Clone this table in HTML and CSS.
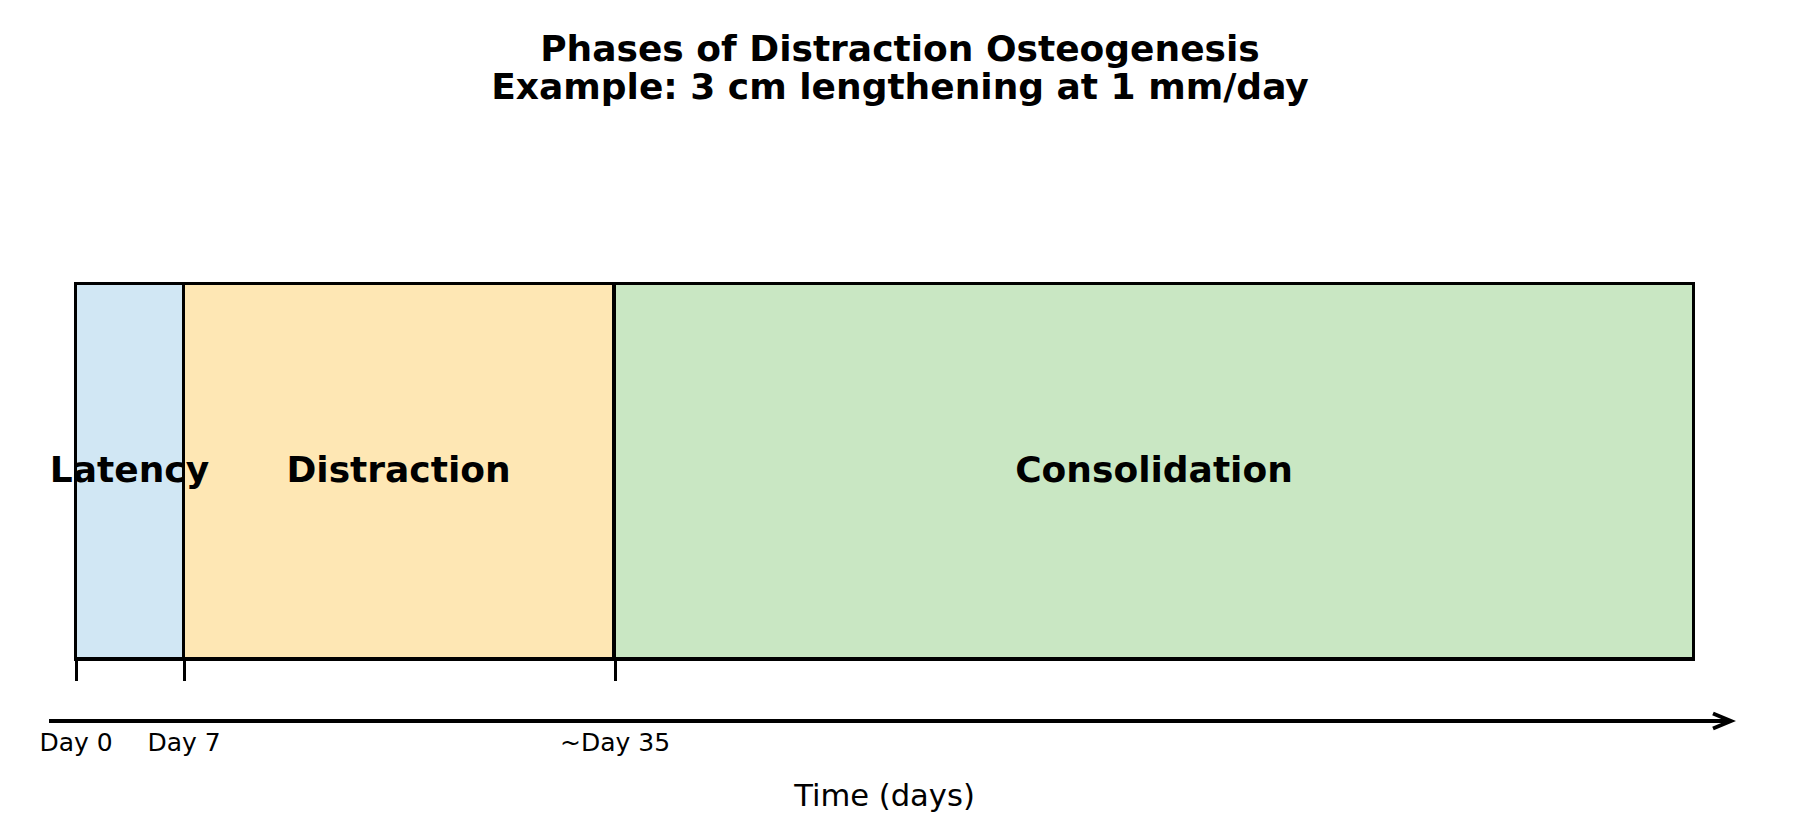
FILE: index.html
```html
<!DOCTYPE html>
<html lang="en">
<head>
<meta charset="utf-8">
<title>Phases of Distraction Osteogenesis</title>
<link rel="stylesheet" href="styles.css">
</head>
<body>
<div class="page">
  <h1 class="title">Phases of Distraction Osteogenesis<br>Example: 3 cm lengthening at 1 mm/day</h1>
  <div class="chart">
    <div class="bar">
      <div class="seg lat"><span class="phase">Latency</span></div>
      <div class="seg dis"><span class="phase">Distraction</span></div>
      <div class="seg con"><span class="phase">Consolidation</span></div>
    </div>
    <div class="ticks">
      <div class="tick"></div>
      <div class="tick"></div>
      <div class="tick"></div>
    </div>
  </div>
  <div class="axis">
    <svg class="arrow" width="1690" height="20" viewBox="0 0 1690 20">
      <line x1="3" y1="10" x2="1683" y2="10" stroke="#000" stroke-width="4"/>
      <polyline points="1667,2.5 1685,10 1667,17.5" fill="none" stroke="#000" stroke-width="4" stroke-linejoin="miter"/>
    </svg>
  </div>
  <div class="chart">
    <div class="labels">
      <div class="cell"><span class="anchor"><span class="daylbl">Day 0</span></span></div>
      <div class="cell"><span class="anchor"><span class="daylbl">Day 7</span></span></div>
      <div class="cell"><span class="anchor"><span class="daylbl">~Day 35</span></span></div>
    </div>
    <div class="xlabel">Time (days)</div>
  </div>
</div>
</body>
</html>
```
FILE: styles.css
```css
html, body {
  margin: 0;
  padding: 0;
  background: #ffffff;
}
body {
  width: 1800px;
  height: 840px;
  overflow: hidden;
  font-family: "DejaVu Sans", "Liberation Sans", sans-serif;
  color: #000;
}
.page {
  padding-top: 30px;
}
.title {
  margin: 0;
  font-size: 36px;
  font-weight: bold;
  line-height: 38px;
  text-align: center;
}
.chart {
  margin-left: 74px;
  width: 1621px;
}
.bar {
  margin-top: 176px;
  height: 379px;
  box-sizing: border-box;
  border: 3px solid #000;
  border-bottom-width: 4px;
  display: flex;
}
.seg {
  display: flex;
  align-items: center;
  justify-content: center;
  box-sizing: border-box;
  min-width: 0;
}
.lat {
  width: 108px;
  flex: none;
  background: #d1e7f4;
  border-right: 3px solid #000;
}
.dis {
  width: 431px;
  flex: none;
  background: #fee7b4;
  border-right: 4px solid #000;
}
.con {
  flex: 1;
  background: #c9e7c3;
}
.phase {
  position: relative;
  z-index: 1;
  white-space: nowrap;
  font-size: 36px;
  font-weight: bold;
  margin-top: -4px;
}
.ticks {
  display: grid;
  grid-template-columns: 108px 431px 1fr;
  margin-left: 1px;
  height: 20px;
}
.tick {
  width: 3px;
  height: 20px;
  background: #000;
}
.axis {
  margin-top: 30px;
  margin-left: 46px;
  height: 20px;
}
.arrow {
  display: block;
}
.labels {
  display: grid;
  grid-template-columns: 108px 431px 1fr;
  margin-left: 2px;
  margin-top: -3px;
}
.cell {
  display: flex;
}
.anchor {
  width: 0;
  display: flex;
  justify-content: center;
}
.daylbl {
  white-space: nowrap;
  font-size: 25px;
}
.xlabel {
  margin-top: 21px;
  text-align: center;
  font-size: 30.6px;
}
```
